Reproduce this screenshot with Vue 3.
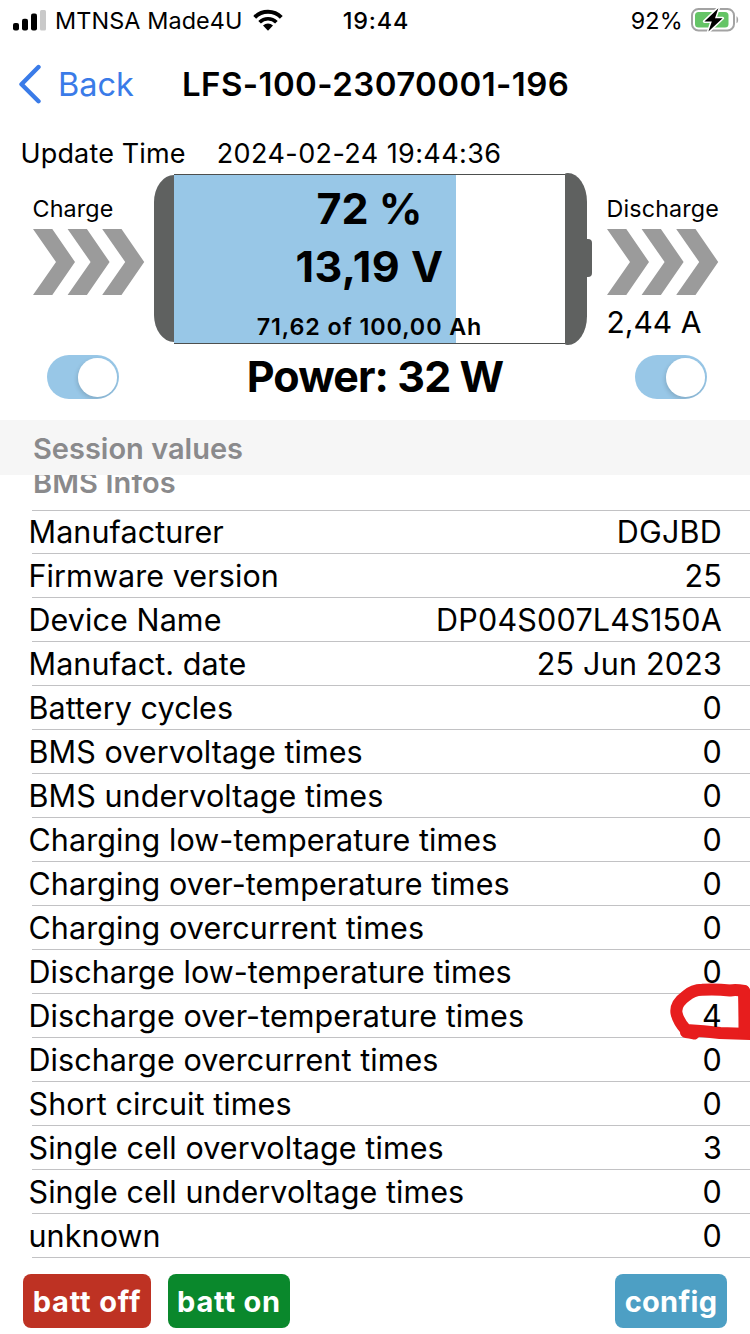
<script setup>
const rows = [
  ['Manufacturer', 'DGJBD'],
  ['Firmware version', '25'],
  ['Device Name', 'DP04S007L4S150A'],
  ['Manufact. date', '25 Jun 2023'],
  ['Battery cycles', '0'],
  ['BMS overvoltage times', '0'],
  ['BMS undervoltage times', '0'],
  ['Charging low-temperature times', '0'],
  ['Charging over-temperature times', '0'],
  ['Charging overcurrent times', '0'],
  ['Discharge low-temperature times', '0'],
  ['Discharge over-temperature times', '4'],
  ['Discharge overcurrent times', '0'],
  ['Short circuit times', '0'],
  ['Single cell overvoltage times', '3'],
  ['Single cell undervoltage times', '0'],
  ['unknown', '0'],
]
const chevrons = [0, 34.6, 69.2]
</script>

<template>
  <div class="screen">
    <header class="status">
      <div class="carrier">
        <svg class="signal" width="34" height="22" viewBox="0 0 34 22">
          <rect x="0" y="14" width="6" height="7.5" rx="2" />
          <rect x="9" y="9.7" width="6" height="11.8" rx="2" />
          <rect x="18" y="4.6" width="6" height="17" rx="2" />
          <rect x="27" y="1" width="6" height="20.5" rx="1.5" fill="#c9c9c9" />
        </svg>
        <span class="carrier-name">MTNSA Made4U</span>
        <svg class="wifi" width="30" height="23" viewBox="0 0 30 23">
          <path d="M1.700 8.300a18.800 18.800 0 0 1 26.600 0" fill="none" stroke="#000" stroke-width="4" />
          <path d="M6.600 13.200a12 12 0 0 1 16.800 0" fill="none" stroke="#000" stroke-width="3.7" />
          <path d="M10 16.600a7.200 7.200 0 0 1 10 0L15 21.800z" />
        </svg>
      </div>
      <span class="clock">19:44</span>
      <div class="power-state">
        <span class="percent">92%</span>
        <svg class="cell" width="48" height="26" viewBox="0 0 48 26">
          <rect x="1" y="2" width="42" height="21.4" rx="6.5" fill="none" stroke="#a3a3a3" stroke-width="2" />
          <rect x="4" y="5" width="33.5" height="15.4" rx="3.5" fill="#65c466" />
          <path d="M45.5 9.2c2.2 1 2.2 6 0 7z" fill="#a3a3a3" />
          <path d="M27.4 1.2 13.4 14.4h7.4l-3.4 10.2L31.6 11.2h-7.6z" stroke="#fff" stroke-width="3" paint-order="stroke" stroke-linejoin="round" />
        </svg>
      </div>
    </header>

    <nav class="nav">
      <svg class="back-icon" width="24" height="40" viewBox="0 0 24 40">
        <path d="M21.500 3 4.500 20.200 21.500 37.200" fill="none" stroke="#3a7be8" stroke-width="4.4" stroke-linecap="round" stroke-linejoin="round" />
      </svg>
      <span class="back">Back</span>
      <h1 class="title">LFS-100-23070001-196</h1>
    </nav>

    <div class="update">
      <span class="update-label">Update Time</span>
      <span class="update-time">2024-02-24 19:44:36</span>
    </div>

    <section class="hero">
      <div class="flow charge">
        <span class="flow-label">Charge</span>
        <svg class="chevrons" width="112" height="66" viewBox="0 0 112 66">
          <path v-for="x in chevrons" :key="x" :transform="`translate(${x} 0)`" d="M0 0h19.3L42 33 19.3 66H0l23-33z" />
        </svg>
      </div>
      <div class="battery">
        <div class="pole-left"></div>
        <div class="gauge">
          <strong class="big soc">72 %</strong>
          <strong class="big volt">13,19 V</strong>
          <strong class="capacity">71,62 of 100,00 Ah</strong>
        </div>
        <div class="pole-right"></div>
        <div class="nub"></div>
      </div>
      <div class="flow discharge">
        <span class="flow-label">Discharge</span>
        <svg class="chevrons" width="112" height="66" viewBox="0 0 112 66">
          <path v-for="x in chevrons" :key="x" :transform="`translate(${x} 0)`" d="M0 0h19.3L42 33 19.3 66H0l23-33z" />
        </svg>
        <span class="amps">2,44 A</span>
      </div>
      <div class="toggle toggle-charge"><i></i></div>
      <strong class="big watt">Power: 32 W</strong>
      <div class="toggle toggle-discharge"><i></i></div>
    </section>

    <div class="section-head">Session values</div>
    <div class="section-clip"><span class="section-next">BMS Infos</span></div>

    <ul class="list">
      <li v-for="[name, value] in rows" :key="name" class="row">
        <span class="name">{{ name }}</span>
        <svg v-if="value === '4'" class="marker" width="84" height="62" viewBox="0 0 84 62">
          <path d="M78 10Q70 8.500 64 9.500 50 8 36 8.800 27 9 20 15 9 23 10.500 32 12 40 20 49 38 50 54 52L84 53" />
          <path d="M20 51Q24 51.500 28 52.500" />
          <path d="M78 10Q78.500 30 78.500 52" />
        </svg>
        <span class="value">{{ value }}</span>
      </li>
    </ul>

    <footer class="actions">
      <button class="btn off">batt off</button>
      <button class="btn on">batt on</button>
      <button class="btn config">config</button>
    </footer>
  </div>
</template>

<style>
body {
  background: #fff;
}
</style>

<style scoped>
.screen {
  width: 750px;
  height: 1334px;
  overflow: hidden;
  display: flex;
  flex-direction: column;
  background: #fff;
  color: #000;
  font-family: Inter, "Liberation Sans", sans-serif;
  white-space: nowrap;
}
.status {
  height: 42px;
  flex: none;
  display: grid;
  grid-template-columns: 1fr auto 1fr;
  align-items: center;
  padding: 0 11px 2px 13px;
  box-sizing: border-box;
  font-size: 23.4px;
}
.carrier,
.power-state {
  display: flex;
  align-items: center;
}
.carrier-name {
  margin-left: 8px;
  letter-spacing: 0.1px;
}
.signal,
.wifi,
.cell {
  flex: none;
}
.wifi {
  margin-left: 10px;
}
.clock {
  font-weight: 500;
  letter-spacing: 0.9px;
}
.power-state {
  justify-content: flex-end;
}
.percent {
  letter-spacing: 0.2px;
}
.cell {
  margin-left: 8px;
}
.nav {
  height: 84px;
  flex: none;
  display: flex;
  align-items: center;
  padding-left: 17px;
}
.back {
  width: 124px;
  margin-left: 17px;
  font-size: 32.500px;
  color: #3a7be8;
}
.title {
  margin: 0;
  font-size: 33px;
  font-weight: 600;
  letter-spacing: 0.42px;
}
.update {
  height: 40px;
  padding: 7px 0 0 20.500px;
  flex: none;
  display: flex;
  align-items: center;
  gap: 31px;
  font-size: 27px;
}
.update-label {
  letter-spacing: 0.15px;
}
.update-time {
  letter-spacing: 0.4px;
}
.hero {
  height: 247px;
  flex: none;
  display: grid;
  grid-template-columns: 154px 438px 1fr;
  grid-template-rows: 172px 75px;
}
.flow {
  display: flex;
  flex-direction: column;
  padding-top: 22px;
}
.charge {
  padding-left: 32.500px;
}
.discharge {
  padding-left: 14.500px;
}
.flow-label {
  font-size: 23.300px;
  line-height: 28px;
  letter-spacing: 0.15px;
}
.chevrons {
  margin-top: 6px;
  fill: #9b9b9b;
}
.amps {
  margin-top: 9px;
  line-height: 36px;
  font-size: 30px;
}
.battery {
  position: relative;
  display: flex;
}
.pole-left {
  width: 20px;
  height: 167px;
  margin-top: 2px;
  background: #5f6160;
  border-radius: 20px 0 0 20px / 27px 0 0 27px;
}
.gauge {
  width: 391px;
  height: 170px;
  margin-top: 1px;
  box-sizing: border-box;
  border-top: 1px solid #4d4f4e;
  border-bottom: 1px solid #4d4f4e;
  background: linear-gradient(90deg, #98c7e7 282px, #fff 282px);
  display: flex;
  flex-direction: column;
  align-items: center;
}
.pole-right {
  width: 21.500px;
  height: 172px;
  background: #5f6160;
  border-radius: 3px 20px 20px 3px / 1px 30px 30px 1px;
}
.nub {
  width: 5.500px;
  height: 38px;
  margin-top: 66px;
  background: #5f6160;
  border-radius: 0 4px 4px 0;
}
.big {
  font-size: 43px;
  line-height: 58px;
  font-weight: 700;
}
.soc {
  margin-top: 4px;
}
.volt {
  letter-spacing: 0.5px;
}
.capacity {
  margin-top: 18px;
  font-size: 23.300px;
  line-height: 28px;
  font-weight: 600;
  letter-spacing: 0.92px;
}
.watt {
  margin-top: 2px;
  justify-self: center;
  padding-left: 4px;
  letter-spacing: -0.9px;
}
.toggle {
  width: 72px;
  height: 44px;
  margin-top: 10px;
  border-radius: 22px;
  background: #98c7e7;
  box-sizing: border-box;
  padding: 3px 2.500px;
  display: flex;
  justify-content: flex-end;
  overflow: hidden;
}
.toggle i {
  width: 38.500px;
  height: 38.500px;
  border-radius: 50%;
  background: #fff;
  box-shadow: -1px 2px 4px rgba(0, 0, 0, 0.14);
}
.toggle-charge {
  margin-left: 47px;
}
.toggle-discharge {
  margin-left: 43px;
}
.section-head {
  height: 55px;
  line-height: 57px;
  flex: none;
  padding-left: 33px;
  background: #f6f6f6;
  color: #8a8a8c;
  font-size: 29px;
  font-weight: 600;
}
.section-clip {
  height: 35px;
  flex: none;
  overflow: hidden;
  padding-left: 33px;
  color: #8a8a8c;
  font-size: 29px;
  font-weight: 600;
}
.section-next {
  display: block;
  line-height: 36px;
  margin-top: -10px;
  letter-spacing: 0.1px;
}
.list {
  margin: 0 0 0 32px;
  padding: 0;
  list-style: none;
  border-top: 1px solid #c2c2c4;
}
.row {
  position: relative;
  height: 44px;
  box-sizing: border-box;
  border-bottom: 1px solid #c2c2c4;
  display: flex;
  align-items: center;
  justify-content: space-between;
  padding-right: 28px;
  font-size: 30.500px;
}
.row:first-child {
  height: 43px;
  padding-bottom: 1px;
}
.name {
  margin-left: -3.500px;
  letter-spacing: 0.08px;
}
.value {
  position: relative;
  letter-spacing: 0.2px;
}
.marker {
  position: absolute;
  right: 0;
  top: -13px;
  fill: none;
  stroke: #e71d1d;
  stroke-width: 12px;
  stroke-linecap: round;
  stroke-linejoin: round;
}
.actions {
  display: flex;
  padding: 16px 23px 0;
}
.btn {
  height: 54px;
  padding: 0;
  border: 0;
  border-radius: 8px;
  color: #fff;
  font: 700 29px Inter, "Liberation Sans", sans-serif;
  letter-spacing: 0.8px;
}
.off {
  width: 128px;
  background: #be3223;
}
.on {
  width: 122px;
  margin-left: 17px;
  background: #0a882c;
}
.config {
  width: 112px;
  margin-left: auto;
  background: #4d9fc4;
  letter-spacing: 0.3px;
}
</style>
